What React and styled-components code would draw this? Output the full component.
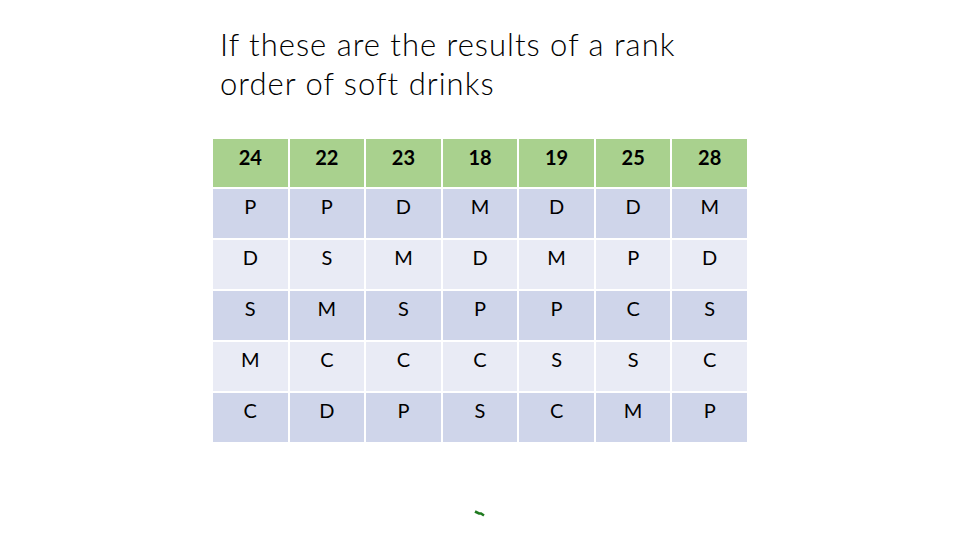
import React from 'react'
import styled, { createGlobalStyle } from 'styled-components'

const GlobalStyle = createGlobalStyle`
  html, body {
    margin: 0;
    padding: 0;
    background: #fff;
  }
`

const Slide = styled.div`
  width: 960px;
  height: 540px;
  background: #fff;
  position: relative;
  overflow: hidden;
  font-family: Lato, "Open Sans", sans-serif;
`
const Content = styled.div`
  padding: 25px 0 0 213px;
  display: flex;
  flex-direction: column;
`
const Title = styled.h1`
  margin: 0 0 0 7px;
  font-size: 31px;
  font-weight: 300;
  line-height: 39px;
  color: #000;
  letter-spacing: 1px;
`
const Grid = styled.div`
  margin-top: 36px;
  width: 534px;
  display: grid;
  grid-template-columns: repeat(7, 1fr);
  grid-template-rows: 48px repeat(5, 49px);
  gap: 2px;
  background: #fff;
`
const Cell = styled.div`
  background: ${p => p.$head ? '#a9d18e' : p.$odd ? '#cfd5ea' : '#e9ebf5'};
  font-size: 20px;
  font-weight: ${p => p.$head ? 700 : 400};
  color: #000;
  display: flex;
  justify-content: center;
  padding-top: ${p => p.$head ? '6px' : '5px'};
  box-sizing: border-box;
  line-height: 24px;
`
const Mark = styled.svg`
  position: absolute;
  left: 474px;
  top: 509px;
`

const head = ['24', '22', '23', '18', '19', '25', '28']
const rows = [
  ['P', 'P', 'D', 'M', 'D', 'D', 'M'],
  ['D', 'S', 'M', 'D', 'M', 'P', 'D'],
  ['S', 'M', 'S', 'P', 'P', 'C', 'S'],
  ['M', 'C', 'C', 'C', 'S', 'S', 'C'],
  ['C', 'D', 'P', 'S', 'C', 'M', 'P'],
]

function App() {
  return (
    <Slide>
      <GlobalStyle />
      <Content>
        <Title>If these are the results of a rank<br />order of soft drinks</Title>
        <Grid>
          {head.map((h, i) => <Cell key={'h' + i} $head>{h}</Cell>)}
          {rows.map((r, ri) => r.map((c, ci) => (
            <Cell key={ri + '-' + ci} $odd={ri % 2 === 0}>{c}</Cell>
          )))}
        </Grid>
      </Content>
      <Mark width="12" height="9" viewBox="0 0 12 9">
        <path d="M1 2.5 L5 4.5 L7 4.5 L10 6.5" stroke="#1f7a1f" strokeWidth="2.6" fill="none" />
      </Mark>
    </Slide>
  )
}

export default App
